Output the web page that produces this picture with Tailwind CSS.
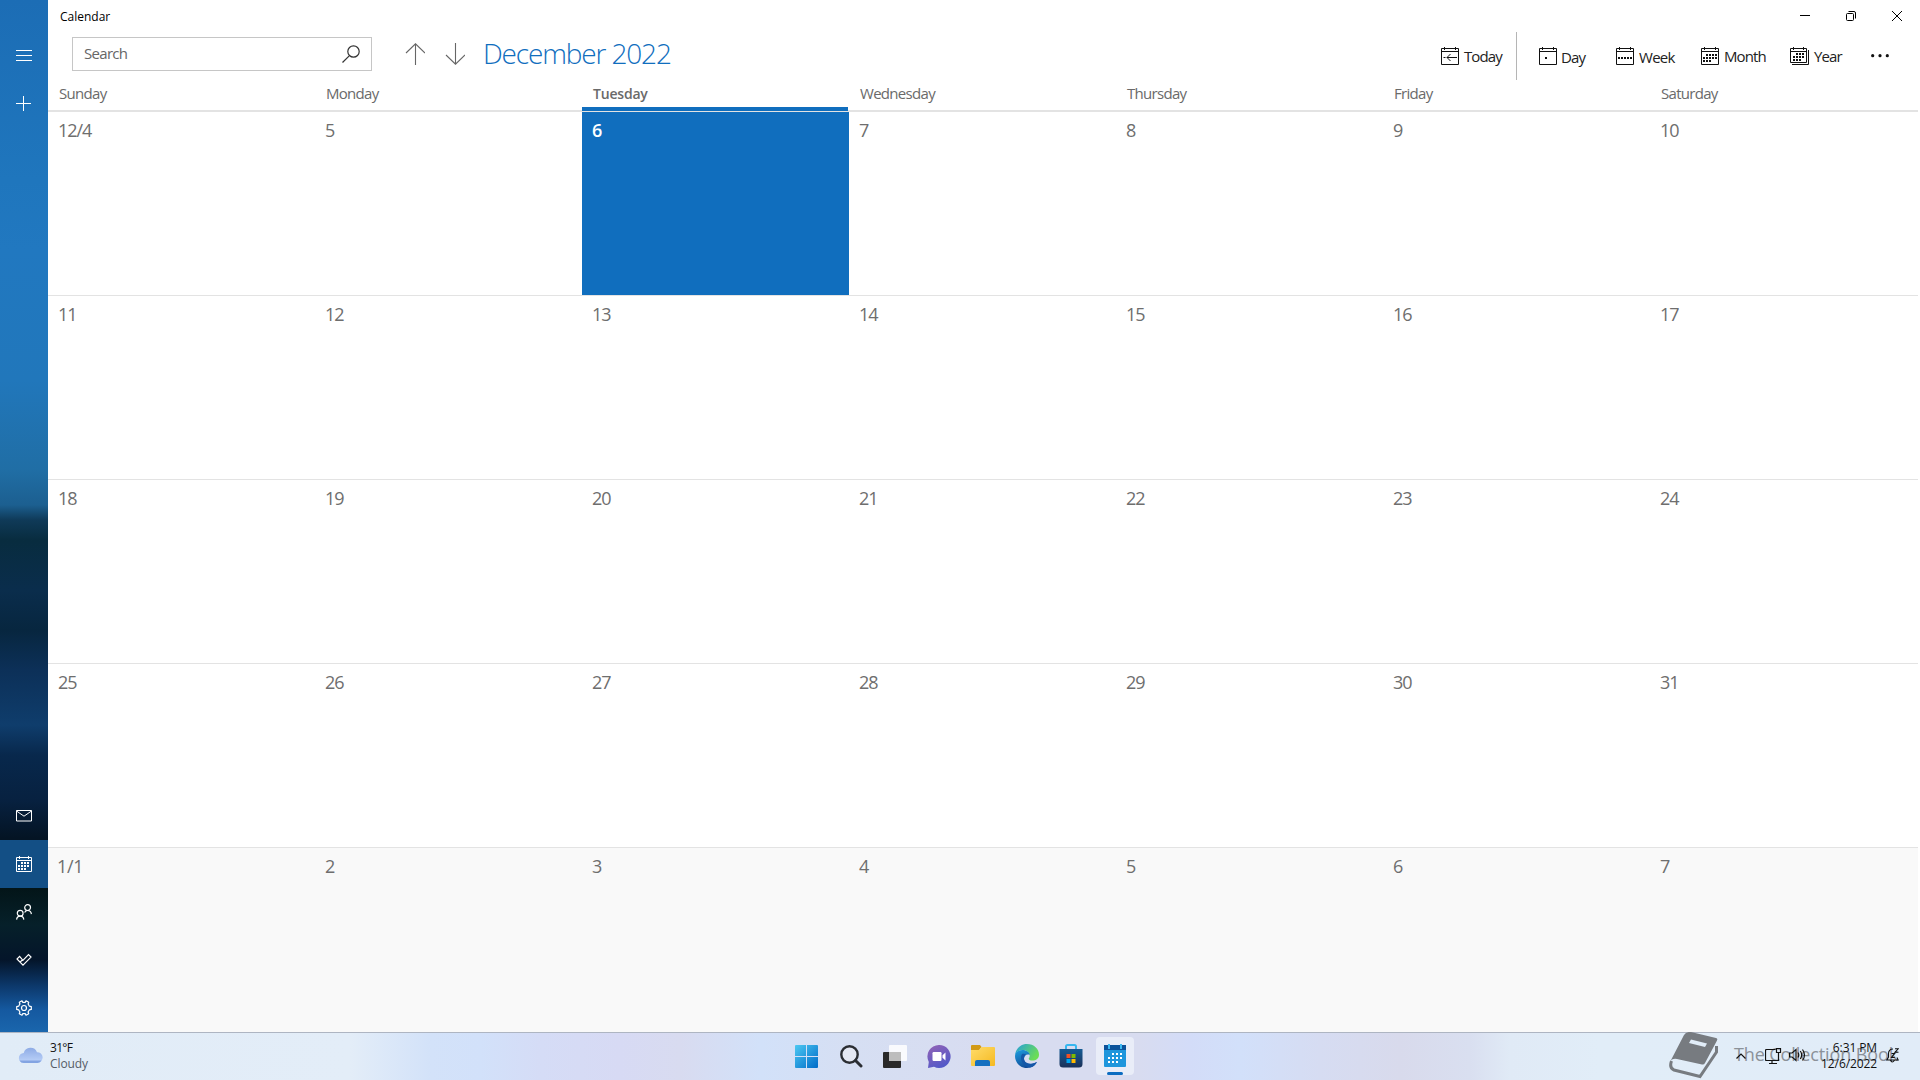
<!DOCTYPE html>
<html lang="en">
<head>
    <meta charset="UTF-8">
    <meta name="viewport" content="width=device-width, initial-scale=1.0">
    <title>Calendar</title>
    <script src="https://cdn.jsdelivr.net/npm/@tailwindcss/browser@4"></script>
</head>
<body class="w-[1920px] h-[1080px] overflow-hidden bg-white font-['Open_Sans','Noto_Sans',sans-serif] flex flex-col">
    <div class="h-[1032px] flex">
        <!-- Sidebar -->
        <aside class="w-12 h-full flex flex-col text-white bg-[linear-gradient(180deg,#1c6db5_0,#1f76bd_180px,#2178c0_250px,#2177bb_380px,#206ea5_470px,#1c5f90_505px,#0f3a58_520px,#082c3f_540px,#0a2d4c_590px,#07263f_630px,#0c3058_670px,#0f3d6c_725px,#08284c_755px,#072140_800px,#041424_838px,#031518_888px,#06202a_925px,#04152a_960px,#0c3769_985px,#1559a0_1010px,#1a66ad_1032px)]">
            <button class="mt-[31px] h-12 flex items-center justify-center">
                <svg width="16" height="12" viewBox="0 0 16 12" fill="none" stroke="currentColor"><path d="M0 1.5h16M0 6.5h16M0 11.5h16"/></svg>
            </button>
            <button class="mt-px h-12 flex items-center justify-center">
                <svg width="16" height="16" viewBox="0 0 16 16" fill="none" stroke="currentColor"><path d="M0 7.5h15M7.5 0v15"/></svg>
            </button>
            <div class="mt-auto">
                <a href="#" class="h-12 flex items-center justify-center">
                    <svg width="16" height="12" viewBox="0 0 16 12" fill="none" stroke="currentColor"><path d="M.5 .5h15v10.500h-15zM.5 1l7.500 5.200L15.500 1"/></svg>
                </a>
                <a href="#" class="h-12 flex items-center justify-center bg-[#134f85]">
                    <svg width="16" height="16" viewBox="0 0 16 16" fill="none" stroke="currentColor"><path d="M.5 1.500h15v14h-15zM.5 4.500h15M3.500 0v3M12.500 0v3"/><path stroke-width="2" stroke-dasharray="2 1" d="M5 7h9M2 10h12M2 13h8"/></svg>
                </a>
                <a href="#" class="h-12 flex items-center justify-center">
                    <svg width="16" height="16" viewBox="0 0 16 16" fill="none" stroke="currentColor" stroke-width="1.200"><circle cx="4.200" cy="9.200" r="2.900"/><circle cx="11.600" cy="3.600" r="2.900"/><path d="M.6 15.600c.2-2.200 1.600-3.500 3.600-3.500s3.400 1.300 3.600 3.500M8.600 8.500c.6-1.300 1.700-2 3-2 2 0 3.500 1.300 3.800 3.600"/></svg>
                </a>
                <a href="#" class="h-12 flex items-center justify-center">
                    <svg width="16" height="14" viewBox="0 0 16 14" fill="none" stroke="currentColor" stroke-width="1.200"><path d="M3.600 3.400 1 6l6 6.200L15 4.100l-2.500-2.500-5.600 5.700zM4.200 9l2.700-2.700"/></svg>
                </a>
                <a href="#" class="h-12 flex items-center justify-center">
                    <svg width="16" height="16" viewBox="0 0 16 16" fill="none" stroke="currentColor" stroke-width="1.200" stroke-linejoin="round"><path d="M6 .8l.7 1.500h2.600L10 .8l2.700 1.500-.6 1.700 1.300 2.200 1.900.4v2.800l-1.900.4-1.300 2.200.6 1.700-2.700 1.500-.7-1.500H6.700L6 15.200l-2.700-1.500.6-1.700-1.300-2.200-1.900-.4V6.600l1.900-.4 1.300-2.200-.6-1.700z"/><circle cx="8" cy="8" r="2.500"/></svg>
                </a>
            </div>
        </aside>

        <main class="flex-1 flex flex-col">
            <!-- Title bar -->
            <div class="h-8 flex justify-between text-black">
                <span class="ml-3 pt-px text-[12px] leading-8">Calendar</span>
                <div class="flex">
                    <button class="w-[46px] flex items-center justify-center"><svg width="10" height="10" viewBox="0 0 10 10" fill="none" stroke="currentColor"><path d="M0 4.500h10"/></svg></button>
                    <button class="w-[46px] flex items-center justify-center"><svg width="10" height="10" viewBox="0 0 10 10" fill="none" stroke="currentColor"><rect x=".5" y="2.500" width="7" height="7" rx="1"/><path d="M2.500.5H8A1.500 1.500 0 0 1 9.500 2v5.500"/></svg></button>
                    <button class="w-[46px] flex items-center justify-center"><svg width="10" height="10" viewBox="0 0 10 10" fill="none" stroke="currentColor"><path d="M0 0l10 10M10 0L0 10"/></svg></button>
                </div>
            </div>

            <!-- Command bar -->
            <div class="h-12 flex">
                <div class="ml-6 mt-[5px] w-[300px] h-[34px] border border-[#c6c6c6] flex items-center justify-between pl-[11px] pr-[11px] text-[#666]">
                    <span class="text-[15px] leading-[30px] pb-0.5 tracking-[-0.7px]">Search</span>
                    <svg class="text-[#333]" width="18" height="18" viewBox="0 0 18 18" fill="none" stroke="currentColor" stroke-width="1.200"><circle cx="11.500" cy="6.500" r="5.700"/><path d="M7.200 10.800.5 17.500"/></svg>
                </div>
                <svg class="ml-[33px] mt-[11px] text-[#666]" width="20" height="22" viewBox="0 0 20 22" fill="none" stroke="currentColor" stroke-width="1.100"><path d="M10.500 22V.8M1 10 10.500.8 20 10"/></svg>
                <svg class="ml-5 mt-[11px] text-[#666]" width="20" height="22" viewBox="0 0 20 22" fill="none" stroke="currentColor" stroke-width="1.100"><path d="M10.500 0v21.200M1 12l9.500 9.200L20 12"/></svg>
                <h1 class="ml-[18px] text-[28px] leading-[42px] font-light tracking-[-1.15px] text-[#106ebe]">December 2022</h1>
                <div class="ml-auto flex text-[15px] leading-[49px] tracking-[-0.9px] text-[#222]">
                    <button class="w-[75px] flex">
                        <svg class="mt-[15px] mr-[5px]" width="18" height="18" viewBox="0 0 18 18" fill="none" stroke="#111"><path d="M.5 1.500h17v16H.5zM.5 4.500h17M3.500 0v3M14.500 0v3M6 10.500h10M9.500 7l-3.500 3.500L9.500 14M2.500 10.500h2"/></svg>
                        <span>Today</span>
                    </button>
                    <div class="w-px h-12 bg-[#b5b5b5] mr-[22px]"></div>
                    <button class="w-[77px] flex">
                        <svg class="mt-[15px] mr-1" width="18" height="18" viewBox="0 0 18 18" fill="none" stroke="#111"><path d="M.5 1.500h17v16H.5zM.5 4.500h17M3.500 0v3M14.500 0v3"/><path stroke-width="2" d="M6 11h2"/></svg>
                        <span class="pt-px">Day</span>
                    </button>
                    <button class="w-[85px] flex">
                        <svg class="mt-[15px] mr-[5px]" width="18" height="18" viewBox="0 0 18 18" fill="none" stroke="#111"><path d="M.5 1.500h17v16H.5zM.5 4.500h17M3.500 0v3M14.500 0v3"/><path stroke-width="2" stroke-dasharray="2 1" d="M2 11h14"/></svg>
                        <span class="pt-px tracking-[-0.7px]">Week</span>
                    </button>
                    <button class="w-[89px] flex">
                        <svg class="mt-[15px] mr-[5px]" width="18" height="18" viewBox="0 0 18 18" fill="none" stroke="#111"><path d="M.5 1.500h17v16H.5zM.5 4.500h17M3.500 0v3M14.500 0v3"/><path stroke-width="2" stroke-dasharray="2 1" d="M5 8h11M2 11h14M2 14h8"/></svg>
                        <span>Month</span>
                    </button>
                    <button class="w-[81px] flex">
                        <svg class="mt-[15px] mr-[5px]" width="19" height="18" viewBox="0 0 19 18" fill="none" stroke="#111"><path d="M.5 1.500h16v14H.5zM.5 4.500h16M3.500 0v3M13.500 0v3M18.500 3v14.500H2"/><path stroke-width="2" stroke-dasharray="2 1" d="M6 7h8M3 10h11M3 13h8"/></svg>
                        <span>Year</span>
                    </button>
                    <button class="w-[49px] flex"><svg class="mt-[22px]" width="18" height="4" viewBox="0 0 18 4" fill="#111"><circle cx="1.700" cy="1.700" r="1.600"/><circle cx="9" cy="1.700" r="1.600"/><circle cx="16.300" cy="1.700" r="1.600"/></svg></button>
                </div>
            </div>

            <!-- Weekday names -->
            <div id="weekdays" class="h-[30px] w-[1869px] grid grid-cols-7 text-[15px] leading-[26px] tracking-[-0.7px] text-[#6a6a6a]"></div>
            <div class="h-[2px] w-[1870px] bg-[#e3e3e3] flex"><div class="ml-[534px] w-[266px] h-px bg-[#106ebe]"></div></div>
            <!-- Month grid -->
            <div id="days" class="w-[1870px] h-[920px] grid grid-cols-[repeat(6,267px)_268px] auto-rows-[184px] text-[18px] tracking-[-1.1px] text-[#6e6e6e]"></div>
        </main>
    </div>

    <!-- Taskbar -->
    <footer class="relative h-12 border-t border-[#aeb5c2] flex justify-center bg-[linear-gradient(90deg,#e1ecf7_0,#e3edf8_350px,#d3e2f9_430px,#d2e1fa_480px,#d5dcf6_540px,#d7daf4_620px,#d8dbf0_680px,#d2e1f9_760px,#d6dff3_850px,#d8dcf0_1000px,#d8dcf0_1140px,#d3dcf8_1190px,#d2e0fa_1240px,#d6dcf2_1320px,#d8daec_1400px,#d9dff0_1470px,#e0eaf6_1510px,#e1edf8_1600px,#e1ecf8_1920px)]">
        <div class="absolute left-[18px] -top-px h-full flex items-center">
            <svg width="26" height="17" viewBox="0 0 26 17"><defs><linearGradient id="cl" x2="0" y2="1"><stop stop-color="#8eabe5"/><stop offset="1" stop-color="#bed4fa"/></linearGradient></defs><path d="M6 16a5 5 0 0 1-.3-10A7 7 0 0 1 19 5.200 5.400 5.400 0 0 1 19.500 16z" fill="url(#cl)"/><path d="M1.500 13.500h22A5 5 0 0 1 19.500 16H6a5 5 0 0 1-4.500-2.500z" fill="#83a4e2"/></svg>
            <div class="ml-1.5 text-[12px] leading-4"><p class="text-[#111] tracking-[-0.7px]">31°F</p><p class="text-[#555c66] tracking-[-0.1px]">Cloudy</p></div>
        </div>
        <div class="absolute left-[784px] top-[3px] flex h-10 items-center">
            <button class="w-11 h-10 mr-px flex items-center justify-center"><svg width="23" height="23" viewBox="0 0 23 23"><defs><linearGradient id="st" x2="1" y2="1"><stop stop-color="#4cc8f2"/><stop offset="1" stop-color="#006bc8"/></linearGradient></defs><path fill="url(#st)" d="M1 0h10v11H0V1a1 1 0 0 1 1-1zM12 0h10a1 1 0 0 1 1 1v10H12zM0 12h11v11H1a1 1 0 0 1-1-1zM12 12h11v10a1 1 0 0 1-1 1H12z"/></svg></button>
            <button class="w-11 h-10 flex items-center justify-center"><svg width="23" height="23" viewBox="0 0 23 23" fill="none" stroke="#2b2e33"><circle cx="9.500" cy="9.500" r="8.200" stroke-width="2.400" fill="#e4e8f3"/><path d="M15.500 15.500l5.500 5.500" stroke-width="3" stroke-linecap="round"/></svg></button>
            <button class="w-11 h-10 flex items-center justify-center"><svg width="24" height="23" viewBox="0 0 24 23"><rect y="7" width="18" height="16" rx="1" fill="#292929"/><rect x="6" width="18" height="16" rx="1" fill="#fff" fill-opacity=".85"/><path d="M6 7h12v9H6z" fill="#bdbdbd"/></svg></button>
            <button class="w-11 h-10 flex items-center justify-center"><svg width="24" height="23" viewBox="0 0 24 23"><defs><linearGradient id="ch" x2=".5" y2="1"><stop stop-color="#9563b5"/><stop offset="1" stop-color="#5359c8"/></linearGradient></defs><path d="M12 0a11.500 11.500 0 1 1-5 21.800L1 23l.8-6A11.500 11.500 0 0 1 12 0z" fill="url(#ch)"/><rect x="5.500" y="7" width="9" height="9" rx="1.200" fill="#fff"/><path d="M15.500 10.200 18.500 7.500v8l-3-2.700z" fill="#fff"/></svg></button>
            <button class="w-11 h-10 flex items-center justify-center"><svg width="24" height="22" viewBox="0 0 24 22"><defs><linearGradient id="fo" x2="1" y2="1"><stop stop-color="#ffdc6a"/><stop offset="1" stop-color="#f5b921"/></linearGradient></defs><path d="M1 0h8l1.500 2-3 4H0V1a1 1 0 0 1 1-1z" fill="#d29a16"/><path d="M0 5h8l2.500-3H23a1 1 0 0 1 1 1v17a1 1 0 0 1-1 1H1a1 1 0 0 1-1-1z" fill="url(#fo)"/><path d="M4 21v-4a2 2 0 0 1 2-2h11a2 2 0 0 1 2 2v4z" fill="#1670c0"/></svg></button>
            <button class="w-11 h-10 flex items-center justify-center"><svg width="24" height="24" viewBox="0 0 24 24"><defs><linearGradient id="ed" x2="1" y2=".5"><stop stop-color="#239ede"/><stop offset="1" stop-color="#6bdd55"/></linearGradient><linearGradient id="ee" x2=".5" y2="1"><stop stop-color="#1c9de0"/><stop offset="1" stop-color="#124a96"/></linearGradient></defs><path d="M0 11C1 4 6 0 12 0c7 0 12 5 12 10.500 0 4-3 6-6.500 6-2.600 0-3.800-1-3.800-1.800 0-.7 1-1.200 1-3C14.700 9 11.500 6 7.500 6 3.500 6 .7 9 0 11z" fill="url(#ed)"/><path d="M0 12C.3 8 3.500 6 7.500 6c4 0 7 2.400 7.200 5-2.500-1.500-5.700.5-5.700 3.800 0 3.800 4 6.300 8 5.200l5-2A12 12 0 0 1 12 24C5 24 0 18.500 0 12z" fill="url(#ee)"/><path d="M7 10c-3 5 1 12.500 8 13.600 3-.6 5.500-2.500 7-5.600-7 3.500-13 1-13-3.500 0-2 1-3.300 2-4.200-1.500-.8-3-.8-4-.3z" fill="#1457a8"/></svg></button>
            <button class="w-11 h-10 flex items-center justify-center"><svg width="24" height="24" viewBox="0 0 24 24"><defs><linearGradient id="so" x2="0" y2="1"><stop stop-color="#155b94"/><stop offset="1" stop-color="#1b3159"/></linearGradient></defs><path d="M7 6V2.500A1.500 1.500 0 0 1 8.500 1h7A1.500 1.500 0 0 1 17 2.500V6" fill="none" stroke="#37b6ef" stroke-width="2"/><path d="M.5 5h23v15a3.500 3.500 0 0 1-3.500 3.500H4A3.500 3.500 0 0 1 .5 20z" fill="url(#so)"/><path fill="#f25022" d="M7.500 10h4v4h-4z"/><path fill="#7fba00" d="M12.500 10h4v4h-4z"/><path fill="#00a4ef" d="M7.500 15h4v4h-4z"/><path fill="#ffb900" d="M12.500 15h4v4h-4z"/></svg></button>
            <button class="relative ml-[3px] w-[38px] h-[38px] rounded bg-[#e9edf8] flex items-center justify-center"><svg class="mb-0.5" width="22" height="23" viewBox="0 0 22 23"><path d="M0 1h22v21a1 1 0 0 1-1 1H1a1 1 0 0 1-1-1z" fill="#1e96dc"/><path d="M0 1h22v5H0z" fill="#0c539b"/><path d="M4 0h2v5H4zM16 0h2v5h-2z" fill="#3cb9f2"/><path d="M8 10h10M4 14h14M4 18h10" stroke="#fff" stroke-width="2" stroke-dasharray="2 2"/></svg><span class="absolute bottom-0 left-[11px] w-4 h-[3px] rounded-full bg-[#0b6cc1]"></span></button>
        </div>

        <!-- Tray -->
        <div class="absolute right-0 top-0 h-full w-[284px] text-[#111]">
            <svg class="absolute left-[33px] -top-px" width="50" height="47" viewBox="0 0 50 47"><path fill="#777b80" fill-rule="evenodd" d="M22 0 47 6Q49 6.500 48 8.500L36 31Q35 33 33 32.500L8 27Q3 26 1 30L15 3Q17-.5 22 0zM22 7.500l-2 3.500L36 15l2-3.500z"/><path d="M47.500 14v6L31 44.500 5 38Q0 36 2.500 29" fill="none" stroke="#777b80" stroke-width="3"/></svg>
            <span class="absolute left-[98px] top-[7px] text-[18px] leading-[28px] tracking-[-0.1px] whitespace-nowrap text-[#8b9199]">The Collection Book</span>
            <svg class="absolute left-[100px] top-[20px]" width="10" height="6" viewBox="0 0 10 6" fill="none" stroke="currentColor" stroke-width="1.200"><path d="M.5 5.500 5 1l4.500 4.500"/></svg>
            <svg class="absolute left-[129px] top-[15px]" width="17" height="16" viewBox="0 0 17 16" fill="none" stroke="currentColor" stroke-width="1.200"><path d="M10.500 1.500H1.500a1 1 0 0 0-1 1v9a1 1 0 0 0 1 1h12V8M7 12.500v3M4 15.500h8M11.500.5h4v4h-4zM13.500 4.500v4"/></svg>
            <svg class="absolute left-[153px] top-[15px]" width="17" height="14" viewBox="0 0 17 14" fill="none" stroke="currentColor" stroke-width="1.200"><path d="M.6 5h2.500L7 1.500v11L3.100 9H.6zM9 4.500q1.500 2.500 0 5M11.300 3q2.800 4 0 8M13.500 1.500q4 5.500 0 11"/></svg>
            <div class="absolute right-[43px] top-[7px] text-right text-[12px] leading-4 tracking-[-0.1px]"><p>6:31 PM</p><p>12/6/2022</p></div>
            <svg class="absolute left-[250px] top-[15px]" width="13" height="15" viewBox="0 0 13 15" fill="none" stroke="currentColor" stroke-width="1.100"><path d="M7 1C4 1 2.500 3 2.500 5.500V9L.8 12h11.400L11 9.500M4.500 12.200q1.500 3.500 4 0M9 .8h3.300L9 4.200h3.500M5.500 5.500h3l-3 4h3.300"/></svg>
        </div>
    </footer>

<script>
const names = ['Sunday', 'Monday', 'Tuesday', 'Wednesday', 'Thursday', 'Friday', 'Saturday'];
document.getElementById('weekdays').innerHTML = names.map((n, i) => i === 2
    ? `<div class="pl-[11px] h-[30px] text-[14px] leading-7 tracking-[-0.2px] font-semibold border-b-3 border-[#106ebe] mr-px">${n}</div>`
    : `<div class="pl-[11px]">${n}</div>`).join('');

const labels = ['12/4'];
for (let d = 5; d <= 31; d++) labels.push(d);
labels.push('1/1', 2, 3, 4, 5, 6, 7);
document.getElementById('days').innerHTML = labels.map((d, i) => {
    if (i === 2) return `<div class="pl-2.5 pt-[5px] border-b border-[#e3e3e3] bg-[#106ebe] text-white font-semibold">${d}</div>`;
    if (i === 28) return `<div class="pl-[9px] pt-[5px] bg-[#f9f9f9] font-medium tracking-[-0.3px]">${d}</div>`;
    if (i > 28) return `<div class="pl-2.5 pt-[5px] bg-[#f9f9f9]">${d}</div>`;
    return `<div class="pl-2.5 pt-[5px] border-b border-[#e3e3e3]">${d}</div>`;
}).join('');
</script>
</body>
</html>
